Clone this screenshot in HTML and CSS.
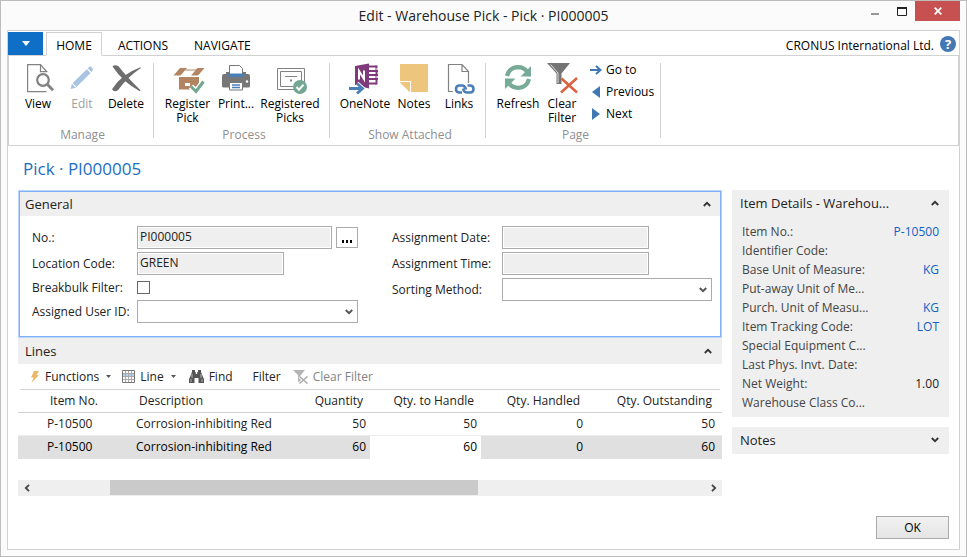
FILE: index.html
```html
<!DOCTYPE html>
<html lang="en">
<head>
<meta charset="utf-8">
<title>Edit - Warehouse Pick - Pick · PI000005</title>
<link rel="stylesheet" href="styles.css">
</head>
<body>
<div class="window">
  <header class="titlebar">
    <h1 class="window-title">Edit - Warehouse Pick - Pick · PI000005</h1>
    <div class="window-buttons">
      <button class="win-btn" aria-label="Minimize"><svg width="10" height="10"><path d="M1 8h8" stroke="#999" stroke-width="2"/></svg></button>
      <button class="win-btn" aria-label="Maximize"><svg width="10" height="9"><path d="M.5 1v7.500h9V1" fill="none" stroke="#222"/><path d="M0 1h10" stroke="#222" stroke-width="2"/></svg></button>
      <button class="win-btn close" aria-label="Close"><svg width="8" height="8"><path d="M.7.7l6.600 6.600M7.300.7L.7 7.300" stroke="#fff" stroke-width="1.800"/></svg></button>
    </div>
  </header>

  <div class="frame">
    <nav class="tabs">
      <button class="app-menu" aria-label="Application menu"><svg width="8" height="5"><path d="M0 0h8L4 5z" fill="#fff"/></svg></button>
      <button class="tab active">HOME</button>
      <button class="tab">ACTIONS</button>
      <button class="tab">NAVIGATE</button>
      <span class="company">CRONUS International Ltd.</span>
      <button class="help" aria-label="Help">?</button>
    </nav>

    <div class="ribbon">
      <section class="group">
        <div class="tools manage">
          <button class="tool">
            <svg width="32" height="32" fill="none" stroke="#828282" stroke-width="1.200"><path d="M24.500 9.500L18.500 2.600H5.600v27h18.900M18.500 2.600v7h7"/><circle cx="21" cy="18" r="5.800" fill="#fff" stroke-width="2.200"/><path d="M25.500 22.500l5.500 5.700" stroke-width="2.800"/></svg>
            <span>View</span></button>
          <button class="tool" disabled>
            <svg width="32" height="32" fill="#a9c4e2"><path d="M4.500 27l1.400-5.200 3.900 3.900z"/><path d="M6.700 20.900L20.800 7.200l3.800 3.800-14.100 13.900z"/><path d="M21.700 6.300l1.700-1.500q1.200-.6 2.200.4l1 1.200q.9 1.100 0 2l-1.200 1.700z"/></svg>
            <span>Edit</span></button>
          <button class="tool">
            <svg width="32" height="32" fill="#6e6e6e"><path d="M2.500 4.600Q5 2 8.500 4.200 16 14 30.500 28.300l-.7.9Q13 20.500 2.500 4.600z"/><path d="M30.300 5.300l.6.800Q17 15.500 8 28.300 4 30.500 2 27.200 11 12.500 30.300 5.300z"/></svg>
            <span>Delete</span></button>
        </div>
        <h2 class="group-name">Manage</h2>
      </section>

      <section class="group">
        <div class="tools process">
          <button class="tool">
            <svg width="32" height="32" fill="#b28462"><path d="M1.500 13.500L8 6h7l-6.500 7.500zM19 13.500L25.500 6h7L26 13.500z"/><path d="M14 7.500h13v1H13z"/><path d="M7 15h20v12.500H7z"/><path d="M13 21h5v3h-5z" fill="#fff"/><path d="M19 24.500l5 5 7.500-10" fill="none" stroke="#fff" stroke-width="6"/><path d="M19 24.500l5 5 7.500-10" fill="none" stroke="#73a792" stroke-width="3"/></svg>
            <span>Register<br>Pick</span></button>
          <button class="tool">
            <svg width="32" height="32"><path d="M4 12q-2 0-2 2v10q0 1.500 1.500 1.500h25q1.500 0 1.500-1.500V14q0-2-2-2z" fill="#777"/><path d="M6 10h3v3H6zM23 10h3v3h-3z" fill="#777"/><path d="M9.500 3.500h10l3 3V14h-13z" fill="#fff" stroke="#777"/><path d="M8.500 11.500h15V15h-15z" fill="#4a7fb8"/><path d="M9.500 20.500h13v7.500h-13z" fill="#fff" stroke="#777"/><path d="M12 23h8M12 25.500h8" stroke="#4a7fb8" stroke-width="1.300"/><circle cx="27" cy="19.500" r="1.200" fill="#fff"/></svg>
            <span>Print...</span></button>
          <button class="tool">
            <svg width="32" height="32" fill="none" stroke="#828282"><path d="M3.500 6.500h27v21h-27z"/><path d="M6.500 9.500h21v15h-21z"/><path d="M11 14.500h12"/><path d="M16 18.500h2" stroke-width="2"/><circle cx="26" cy="25" r="7" fill="#73a792" stroke="none"/><path d="M22.500 25l2.500 2.700 4.500-5" stroke="#fff" stroke-width="2"/></svg>
            <span>Registered<br>Picks</span></button>
        </div>
        <h2 class="group-name">Process</h2>
      </section>

      <section class="group">
        <div class="tools attached">
          <button class="tool">
            <svg width="32" height="32"><path d="M20 4.500h7.500M20 9h9M20 13h9M20 17h9M20 21.500h7.500" stroke="#80397b" stroke-width="2"/><path d="M27.500 3.500v19" stroke="#80397b" stroke-width="2"/><path d="M27 7h3M27 15h3" stroke="#fff" stroke-width="1.200"/><path d="M6 4l14-2.500v25L6 23z" fill="#80397b"/><path d="M10 17.500V9l5 8V8.500" fill="none" stroke="#fff" stroke-width="2"/><path d="M0 26.500h13M8 21.500l5.500 5-5.500 5" fill="none" stroke="#fff" stroke-width="4.500"/><path d="M0 26.500h13M8 21.500l5.500 5-5.500 5" fill="none" stroke="#4a7fb8" stroke-width="2.800"/></svg>
            <span>OneNote</span></button>
          <button class="tool">
            <svg width="32" height="32"><path d="M2 2h28v28H2z" fill="#edc57c"/><path d="M1 19.500h11.500V31" fill="none" stroke="#fff" stroke-width="1.200"/><path d="M2 20.500l9.500 9.500H2z" fill="#fff"/><path d="M3.500 20.500h8v8z" fill="#edc57c"/></svg>
            <span>Notes</span></button>
          <button class="tool">
            <svg width="32" height="32" fill="none"><path d="M10 29.500H5.500v-27h13.500l6.500 7V21M19 2.500v7h6.500" stroke="#828282" stroke-width="1.200"/><g stroke="#4a7fb8" stroke-width="2.600"><path d="M23 27.500q-1-4-4-4h-2.500q-3.500 0-3.500 3.500t3.500 3.500h2.500"/><path d="M20 26.500q1 4 4 4h3q3.500 0 3.500-3.500t-3.500-3.500h-2.500"/></g></svg>
            <span>Links</span></button>
        </div>
        <h2 class="group-name">Show Attached</h2>
      </section>

      <section class="group">
        <div class="tools page-tools">
          <button class="tool">
            <svg width="32" height="32"><g fill="none" stroke="#77ab97" stroke-width="4.200"><path d="M5 14Q7 5.500 16 5.200q6 0 9.500 5"/><path d="M27 17q-2 8.500-11 8.800-6 0-9.500-5"/></g><path d="M29 4v10.500H18.500zM3 27V16.500h10.500z" fill="#77ab97"/></svg>
            <span>Refresh</span></button>
          <button class="tool">
            <svg width="32" height="32"><path d="M1 1h23l-8.500 10.500V22h-5V11.500z" fill="#757575"/><path d="M4.500 2.500l7.500 8.500v10" fill="none" stroke="#ddd"/><path d="M15.500 16.500l15.500 14M31 16L15 30.500" stroke="#d9643f" stroke-width="2.600"/></svg>
            <span>Clear<br>Filter</span></button>
          <div class="small-tools">
            <button class="small-tool"><svg width="12" height="12"><path d="M0 6h9M6 2l4.500 4L6 10" fill="none" stroke="#3f78b5" stroke-width="2"/></svg>Go to</button>
            <button class="small-tool"><svg width="12" height="12"><path d="M10 0v12L2 6z" fill="#3f78b5"/></svg>Previous</button>
            <button class="small-tool"><svg width="12" height="12"><path d="M2 0v12l8-6z" fill="#3f78b5"/></svg>Next</button>
          </div>
        </div>
        <h2 class="group-name">Page</h2>
      </section>
    </div>

    <h2 class="page-title">Pick · PI000005</h2>

    <div class="columns">
      <main class="main">
        <section class="general">
          <div class="section-head"><h3>General</h3><button class="toggle" aria-label="Collapse General"><svg width="8" height="6"><path d="M.8 5L4 1.800 7.200 5" fill="none" stroke="#333" stroke-width="1.800"/></svg></button></div>
          <form class="fields">
            <div class="field-col left">
              <div class="field"><label for="no">No.:</label><input class="text ro" id="no" value="PI000005" readonly><button class="assist" type="button" aria-label="Assist edit"><svg width="12" height="3"><path d="M1 0h2v3H1zM5 0h2v3H5zM9 0h2v3H9z"/></svg></button></div>
              <div class="field"><label for="loc">Location Code:</label><input class="text ro short" id="loc" value="GREEN" readonly></div>
              <div class="field check-row"><label for="bulk">Breakbulk Filter:</label><input class="check" type="checkbox" id="bulk"></div>
              <div class="field"><label for="user">Assigned User ID:</label><select class="text" id="user"><option></option></select></div>
            </div>
            <div class="field-col right">
              <div class="field"><label for="date">Assignment Date:</label><input class="text ro short" id="date" readonly></div>
              <div class="field"><label for="time">Assignment Time:</label><input class="text ro short" id="time" readonly></div>
              <div class="field"><label for="sort">Sorting Method:</label><select class="text" id="sort"><option></option></select></div>
            </div>
          </form>
        </section>

        <section class="lines">
          <div class="section-head"><h3>Lines</h3><button class="toggle" aria-label="Collapse Lines"><svg width="8" height="6"><path d="M.8 5L4 1.800 7.200 5" fill="none" stroke="#333" stroke-width="1.800"/></svg></button></div>
          <div class="toolbar">
            <button class="bar-btn functions"><svg width="10" height="12"><path d="M4 0h5L6.500 4H9L1.500 12l2-5.500H1z" fill="#ecb869"/></svg>Functions<svg class="drop" width="5" height="3"><path d="M0 0h5L2.500 3z" fill="#555"/></svg></button>
            <button class="bar-btn line"><svg width="13" height="13"><path d="M1 4h11v3H1z" fill="#b9d0ea"/><path d="M3.500 0v13M6.500 0v13M9.500 0v13M0 3.500h13M0 6.500h13M0 9.500h13" stroke="#aaa"/><path d="M.5.5h12v12H.5z" fill="none" stroke="#777"/></svg>Line<svg class="drop" width="5" height="3"><path d="M0 0h5L2.500 3z" fill="#555"/></svg></button>
            <button class="bar-btn find"><svg width="15" height="13"><path d="M3 0h3v2h.8v2h1.400V2H9V0h3v2l2 5 1 2v4H9.500V8h-4v5H0V9l1-2 2-5z" fill="#555"/><path d="M3 4v4M12 4v4M2 9v3M13 9v3" stroke="#ccc" stroke-width=".8"/></svg>Find</button>
            <button class="bar-btn filter">Filter</button>
            <button class="bar-btn clear" disabled><svg width="15" height="14"><path d="M0 0h12L8 5v7H5V5z" fill="#b5b5b5"/><path d="M6.500 6.500l8 7M14.500 6.500l-8 7" stroke="#fff" stroke-width="3"/><path d="M6.500 6.500l8 7M14.500 6.500l-8 7" stroke="#aaa" stroke-width="1.500"/></svg>Clear Filter</button>
          </div>
          <table class="grid">
            <colgroup><col class="c-item"><col><col class="c-qty"><col class="c-handle"><col class="c-handled"><col class="c-out"></colgroup>
            <thead><tr><th class="item">Item No.</th><th class="desc">Description</th><th>Quantity</th><th>Qty. to Handle</th><th>Qty. Handled</th><th class="last">Qty. Outstanding</th></tr></thead>
            <tbody>
              <tr><td class="item">P-10500</td><td class="desc">Corrosion-inhibiting Red</td><td>50</td><td>50</td><td>0</td><td class="last">50</td></tr>
              <tr class="selected"><td class="item">P-10500</td><td class="desc">Corrosion-inhibiting Red</td><td>60</td><td class="editable">60</td><td>0</td><td class="last">60</td></tr>
            </tbody>
          </table>
          <div class="scrollbar">
            <button class="scroll-btn" aria-label="Scroll left"><svg width="6" height="8"><path d="M5 .8L1.800 4 5 7.200" fill="none" stroke="#444" stroke-width="1.800"/></svg></button>
            <div class="track"><div class="thumb"></div></div>
            <button class="scroll-btn" aria-label="Scroll right"><svg width="6" height="8"><path d="M1 .8L4.200 4 1 7.200" fill="none" stroke="#444" stroke-width="1.800"/></svg></button>
          </div>
        </section>
      </main>

      <aside class="facts">
        <section class="factbox">
          <div class="section-head"><h3>Item Details - Warehou...</h3><button class="toggle" aria-label="Collapse Item Details"><svg width="8" height="6"><path d="M.8 5L4 1.800 7.200 5" fill="none" stroke="#333" stroke-width="1.800"/></svg></button></div>
          <dl class="details">
            <div><dt>Item No.:</dt><dd><a href="#">P-10500</a></dd></div>
            <div><dt>Identifier Code:</dt><dd></dd></div>
            <div><dt>Base Unit of Measure:</dt><dd><a href="#">KG</a></dd></div>
            <div><dt>Put-away Unit of Me...</dt><dd></dd></div>
            <div><dt>Purch. Unit of Measu...</dt><dd><a href="#">KG</a></dd></div>
            <div><dt>Item Tracking Code:</dt><dd><a href="#">LOT</a></dd></div>
            <div><dt>Special Equipment C...</dt><dd></dd></div>
            <div><dt>Last Phys. Invt. Date:</dt><dd></dd></div>
            <div><dt>Net Weight:</dt><dd>1.00</dd></div>
            <div><dt>Warehouse Class Co...</dt><dd></dd></div>
          </dl>
        </section>
        <section class="factbox">
          <div class="section-head"><h3>Notes</h3><button class="toggle" aria-label="Expand Notes"><svg width="8" height="6"><path d="M.8 1L4 4.200 7.200 1" fill="none" stroke="#333" stroke-width="1.800"/></svg></button></div>
        </section>
      </aside>
    </div>

    <footer class="footer"><button class="ok">OK</button></footer>
  </div>
</div>
</body>
</html>
```
FILE: styles.css
```css
* { box-sizing: border-box; }
body, h1, h2, h3, dl, dd { margin: 0; }
body {
  font: 12px/16px "Open Sans", "Noto Sans", sans-serif;
  color: #222;
}
h1, h2, h3, th { font-weight: 400; }
button {
  font: inherit;
  color: inherit;
  padding: 0;
  border: 0;
  background: none;
  white-space: nowrap;
}
svg { display: block; flex: none; overflow: visible; }

.window {
  display: flex;
  flex-direction: column;
  min-height: 100vh;
  padding: 0 6px 6px;
  border: 1px solid #bdbdbd;
  background: #fbfbfb;
}
.titlebar { position: relative; height: 29px; }
.window-title {
  padding-top: 2px;
  font-size: 14px;
  line-height: 26px;
  text-align: center;
}
.window-buttons { position: absolute; top: 0; right: 0; display: flex; }
.win-btn {
  display: flex;
  align-items: center;
  justify-content: center;
  width: 27px;
  height: 20px;
}
.win-btn.close { width: 45px; background: #c75050; }

.frame {
  flex: 1;
  display: flex;
  flex-direction: column;
  border: 1px solid #d2d2d2;
  background: #fff;
}
.tabs {
  display: flex;
  align-items: center;
  height: 25px;
  padding-top: 1px;
  border-bottom: 1px solid #d2d2d2;
  color: #000;
}
.app-menu {
  display: flex;
  align-items: center;
  justify-content: center;
  width: 35px;
  height: 23px;
  background: #0f6fc6;
}
.tab { height: 24px; padding: 4px 16px 0; }
.tab.active {
  width: 56px;
  margin: 0 0 -1px 3px;
  padding: 3px 0 0;
  border: 1px solid #d2d2d2;
  border-bottom-color: #fff;
  background: #fff;
}
.active + .tab { padding-right: 10px; }
.company { margin-left: auto; padding-top: 4px; }
.help {
  width: 16px;
  height: 16px;
  margin: 0 3px 0 6px;
  border-radius: 50%;
  background: #4478b4;
  color: #fff;
  font-size: 13px;
  font-weight: 700;
  line-height: 16px;
}

.ribbon {
  display: flex;
  height: 90px;
  padding: 6px 0 2px;
  border: 1px solid #d2d2d2;
  border-top: 0;
}
.group {
  position: relative;
  display: flex;
  flex-direction: column;
  justify-content: space-between;
  padding: 0 5px 0 9px;
}
.group:first-child { padding-left: 7px; }
.group::after {
  content: "";
  position: absolute;
  top: 1px;
  right: 0;
  bottom: 5px;
  border-right: 1px solid #d2d2d2;
}
.tools { display: grid; color: #000; }
.manage { grid-template-columns: repeat(3, 44px); padding-right: 1px; }
.process { grid-template-columns: 49px 48px 60px; padding-right: 5px; }
.attached { grid-template-columns: 52px 46px 44px; }
.page-tools { grid-template-columns: 46px 42px 73px; }
.tool {
  display: flex;
  flex-direction: column;
  align-items: center;
  gap: 3px;
  line-height: 14px;
}
.tool:disabled { color: #a0a0a0; }
.group-name { color: #8f8f8f; font-size: 12px; line-height: 16px; text-align: center; }
.small-tools { padding-left: 7px; }
.small-tool { display: flex; align-items: center; gap: 4px; height: 22px; }
.small-tools .small-tool:first-child { height: 16px; margin-bottom: 3px; }

.page-title {
  padding: 10px 15px 9px;
  color: #1b6ec2;
  font-size: 17px;
  line-height: 25px;
}
.columns { display: flex; gap: 10px; padding: 0 10px; }
.main { flex: 1; min-width: 0; }
.facts { width: 217px; }

.section-head {
  display: flex;
  align-items: center;
  justify-content: space-between;
  height: 26px;
  padding: 0 10px 0 7px;
  background: #efefef;
}
.section-head h3 { font-size: 13px; line-height: 18px; }

.general { border: 1px solid #bcd6fb; outline: 1px solid #7eb0f7; outline-offset: -2px; }
.general .section-head { height: 24px; margin: 1px 1px 0; padding: 0 9px 1px 5px; }
.fields { display: grid; grid-template-columns: 1fr 1fr; padding: 10px 1px 14px; }
.field-col { display: flex; flex-direction: column; gap: 3px; }
.field-col.left { padding: 0 12px; }
.field-col.right { padding: 0 8px 0 22px; }
.field { display: flex; align-items: center; height: 23px; }
.field label { flex: none; width: 105px; white-space: nowrap; }
.right .field label { width: 110px; }
.check-row { height: 19px; }
.text {
  flex: 1;
  min-width: 0;
  height: 23px;
  padding: 0 2px 2px;
  border: 1px solid #ababab;
  border-radius: 0;
  background: #fff;
  color: #222;
  font: inherit;
}
.ro { box-shadow: inset 0 0 0 1px #fff; background: #efefef; }
.short { flex: none; width: 147px; }
select.text {
  appearance: none;
  background: #fff url("data:image/svg+xml,%3Csvg xmlns='http://www.w3.org/2000/svg' width='8' height='6'%3E%3Cpath d='M.8 1L4 4.200 7.200 1' fill='none' stroke='%23555' stroke-width='2'/%3E%3C/svg%3E") no-repeat right 4px center;
}
.assist {
  display: flex;
  align-items: flex-end;
  justify-content: center;
  width: 22px;
  height: 21px;
  margin-left: 4px;
  padding-bottom: 4px;
  border: 1px solid #ababab;
  background: #fff;
}
.check {
  appearance: none;
  width: 13px;
  height: 13px;
  margin: 0;
  border: 1px solid #666;
  background: #fff;
}

.toolbar {
  display: flex;
  align-items: center;
  height: 26px;
  margin: 0 2px;
  padding-left: 10px;
  border-bottom: 1px solid #d2d2d2;
}
.bar-btn { display: flex; align-items: center; gap: 5px; }
.bar-btn:disabled { color: #838383; }
.drop { margin-left: 2px; }
.line { margin-left: 11px; }
.find { margin-left: 13px; }
.filter { margin-left: 20px; }
.clear { margin-left: 12px; }

.grid { width: 100%; border-spacing: 0; table-layout: fixed; }
.c-item { width: 114px; }
.c-qty { width: 90px; }
.c-handle { width: 111px; }
.c-handled { width: 106px; }
.c-out { width: 135px; }
.grid th, .grid td { height: 23px; padding: 0 4px 0 0; text-align: right; white-space: nowrap; }
.grid th { padding-right: 7px; border-bottom: 1px solid #d2d2d2; }
.grid td { border-bottom: 1px solid #ececec; }
.grid .last { padding-right: 7px; }
.grid th.last { padding-right: 10px; }
.grid .item { padding-left: 29px; text-align: left; }
.grid th.item { padding-left: 32px; }
.grid .desc { padding-left: 4px; text-align: left; }
.grid th.desc { padding-left: 7px; }
.grid .selected td { background: #e0e0e0; border-color: #e0e0e0; color: #000; }
.grid .selected .editable { background: #fff; border-color: #fff; }

.scrollbar { display: flex; height: 16px; margin-top: 21px; background: #efefef; }
.scroll-btn { display: flex; align-items: center; justify-content: center; width: 17px; }
.track { flex: 1; padding-left: 2px; }
.thumb { width: 55%; height: 15px; margin-left: 11%; background: #cacaca; }

.factbox { margin-bottom: 10px; background: #efefef; }
.factbox .section-head { height: 27px; padding: 0 10px 2px 8px; }
.details { padding: 5px 10px; color: #444; }
.details div { display: flex; justify-content: space-between; line-height: 19px; white-space: nowrap; }
.details dd { color: #222; }
.details a { color: #0f62c4; text-decoration: none; }

.footer { display: flex; justify-content: flex-end; margin-top: auto; padding: 0 10px; }
.ok {
  width: 73px;
  height: 23px;
  margin-bottom: 10px;
  border: 1px solid #ababab;
  background: linear-gradient(#f2f2f2, #e4e4e4);
  color: #000;
}
```
